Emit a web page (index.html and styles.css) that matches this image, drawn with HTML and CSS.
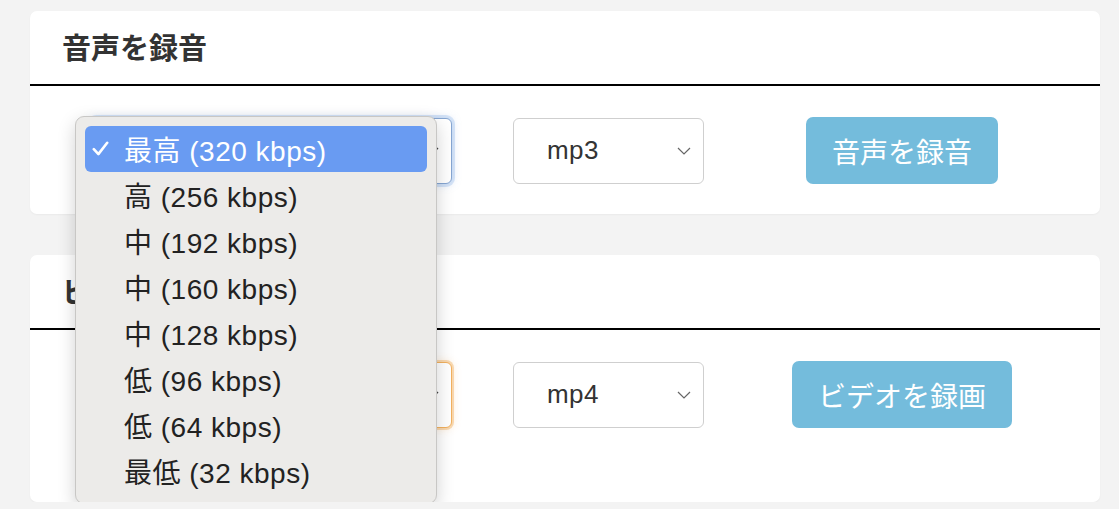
FILE: index.html
```html
<!DOCTYPE html>
<html lang="ja">
<head>
  <meta charset="UTF-8" />
  <meta name="viewport" content="width=device-width, initial-scale=1.0"/>
  <title>録音・録画</title>
  <link rel="stylesheet" href="styles.css">
</head>
<body>
  <div class="page">
    <section class="card">
      <h2 class="card-title">音声を録音</h2>
      <div class="card-body">
        <div class="picker">
          <div class="select select-wide is-focused">
            <span>最高 (320 kbps)</span>
            <svg class="chevron" width="14" height="8" viewBox="0 0 14 8"><path d="M1 1l6 6 6-6" fill="none" stroke="#444" stroke-width="1.4"/></svg>
          </div>
          <ul class="popup">
            <li class="popup-item selected"><span class="check"><svg width="17" height="15" viewBox="0 0 17 15"><path d="M1.8 8.2l4.6 4.9L15.2 1.8" fill="none" stroke="#fff" stroke-width="2.6" stroke-linecap="round" stroke-linejoin="round"/></svg></span>最高 (320 kbps)</li>
            <li class="popup-item"><span class="check"></span>高 (256 kbps)</li>
            <li class="popup-item"><span class="check"></span>中 (192 kbps)</li>
            <li class="popup-item"><span class="check"></span>中 (160 kbps)</li>
            <li class="popup-item"><span class="check"></span>中 (128 kbps)</li>
            <li class="popup-item"><span class="check"></span>低 (96 kbps)</li>
            <li class="popup-item"><span class="check"></span>低 (64 kbps)</li>
            <li class="popup-item"><span class="check"></span>最低 (32 kbps)</li>
          </ul>
        </div>
        <div class="select select-narrow">
          <span>mp3</span>
          <svg class="chevron" width="14" height="8" viewBox="0 0 14 8"><path d="M1 1l6 6 6-6" fill="none" stroke="#666" stroke-width="1.2"/></svg>
        </div>
        <div class="action">
          <button class="btn">音声を録音</button>
        </div>
      </div>
    </section>

    <section class="card">
      <h2 class="card-title">ビデオを録画</h2>
      <div class="card-body card-body-tall">
        <div class="picker">
          <div class="select select-wide is-active">
            <span>最高 (2.5 Mbps)</span>
            <svg class="chevron" width="14" height="8" viewBox="0 0 14 8"><path d="M1 1l6 6 6-6" fill="none" stroke="#444" stroke-width="1.4"/></svg>
          </div>
        </div>
        <div class="select select-narrow">
          <span>mp4</span>
          <svg class="chevron" width="14" height="8" viewBox="0 0 14 8"><path d="M1 1l6 6 6-6" fill="none" stroke="#666" stroke-width="1.2"/></svg>
        </div>
        <div class="action">
          <button class="btn">ビデオを録画</button>
        </div>
      </div>
    </section>
  </div>
</body>
</html>
```

FILE: styles.css
```css
* { box-sizing: border-box; }
body {
  margin: 0;
  background: #f3f3f3;
  font-family: 'Liberation Sans', 'Noto Sans CJK JP', sans-serif;
  color: #333;
}
.page {
  padding: 11px 19px 0 30px;
  display: flex;
  flex-direction: column;
  gap: 41px;
}
.card {
  background: #fff;
  border-radius: 7px;
  box-shadow: 0 1px 2px rgba(0, 0, 0, 0.04);
}
.card-title {
  margin: 0;
  height: 75px;
  padding: 0 32px 4px;
  display: flex;
  align-items: center;
  font-size: 29px;
  font-weight: 700;
  color: #333;
  border-bottom: 2px solid #000;
}
.card-body {
  display: flex;
  align-items: center;
  padding: 31px 0 30px 60px;
}
.card-body-tall { padding-bottom: 74px; }
.picker { position: relative; }
.select {
  height: 66px;
  display: flex;
  align-items: center;
  justify-content: space-between;
  padding: 0 12px 0 33px;
  border: 1.5px solid #cfcfcf;
  border-radius: 6px;
  background: #fff;
  font-size: 26px;
  letter-spacing: 0.4px;
  color: #333;
}
.select-wide { width: 362px; }
.select-narrow { width: 191px; margin-left: 61px; }
.select.is-focused {
  border-color: #86a6d2;
  box-shadow: 0 0 0 3px rgba(150, 185, 235, 0.35), 0 0 10px rgba(120, 160, 220, 0.35);
}
.select.is-active {
  border-color: #f2b15f;
  box-shadow: 0 0 0 2px rgba(245, 180, 100, 0.45), 0 0 10px rgba(245, 170, 80, 0.3);
}
.action {
  flex: 1;
  display: flex;
  justify-content: center;
}
.btn {
  height: 67px;
  padding: 0 26px;
  border: none;
  border-radius: 7px;
  background: #74bcdc;
  color: #fff;
  font-family: inherit;
  font-size: 28px;
}
.popup {
  position: absolute;
  left: -15px;
  top: -2px;
  width: 362px;
  margin: 0;
  padding: 9px;
  list-style: none;
  background: #ecebe9;
  border: 1px solid #c8c7c5;
  border-radius: 9px;
  box-shadow: 0 6px 18px rgba(0, 0, 0, 0.18);
  z-index: 10;
}
.popup-item {
  height: 46px;
  display: flex;
  align-items: center;
  padding-left: 7px;
  border-radius: 6px;
  font-size: 28px;
  letter-spacing: 0.5px;
  color: #222;
}
.popup-item.selected {
  background: #699bf2;
  color: #fff;
}
.check {
  width: 32px;
  display: flex;
  align-items: center;
}
```
